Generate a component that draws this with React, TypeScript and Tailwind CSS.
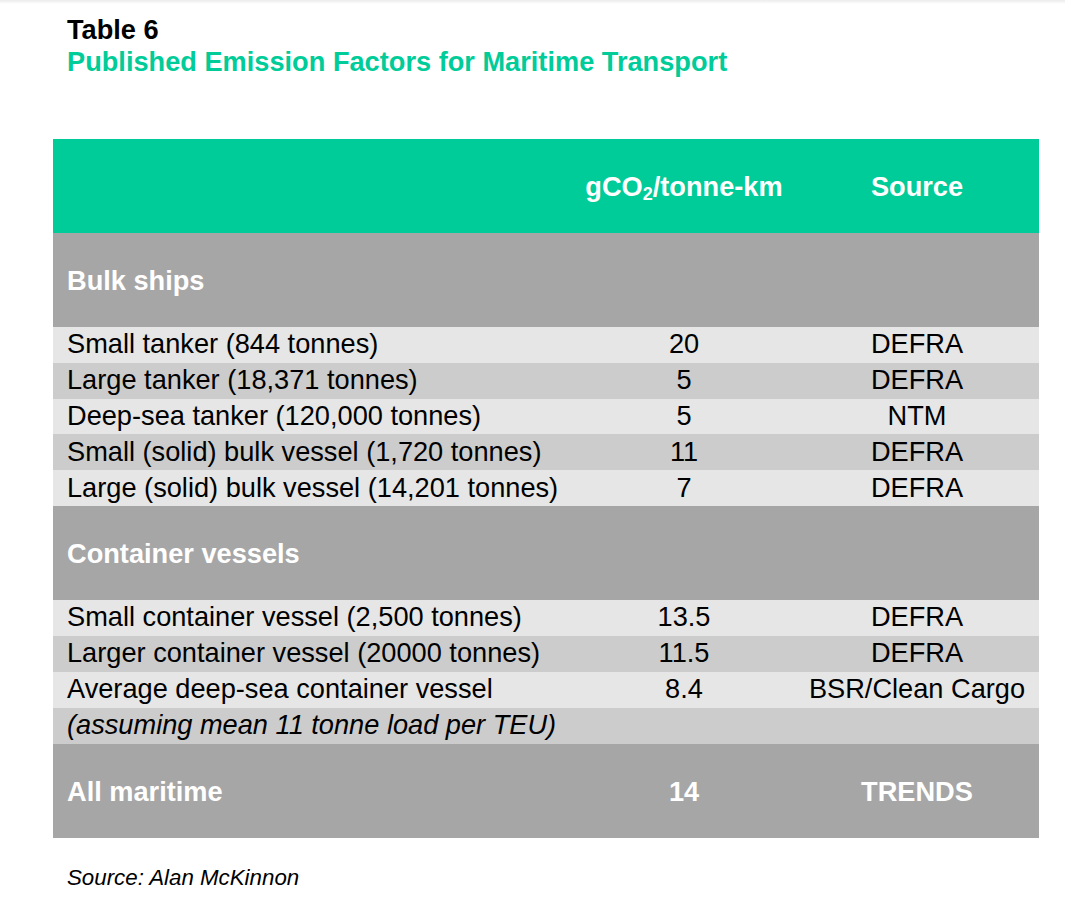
import React from "react";

type Row = {
  label: string;
  value?: string;
  source?: string;
  italic?: boolean;
};

const bulkRows: Row[] = [
  { label: "Small tanker (844 tonnes)", value: "20", source: "DEFRA" },
  { label: "Large tanker (18,371 tonnes)", value: "5", source: "DEFRA" },
  { label: "Deep-sea tanker (120,000 tonnes)", value: "5", source: "NTM" },
  { label: "Small (solid) bulk vessel (1,720 tonnes)", value: "11", source: "DEFRA" },
  { label: "Large (solid) bulk vessel (14,201 tonnes)", value: "7", source: "DEFRA" },
];

const containerRows: Row[] = [
  { label: "Small container vessel (2,500 tonnes)", value: "13.5", source: "DEFRA" },
  { label: "Larger container vessel (20000 tonnes)", value: "11.5", source: "DEFRA" },
  { label: "Average deep-sea container vessel", value: "8.4", source: "BSR/Clean Cargo" },
  { label: "(assuming mean 11 tonne load per TEU)", italic: true },
];

const cols = "grid grid-cols-[520px_222px_244px]";

const GroupRow = ({ label, value, source }: Row) => (
  <div className={`${cols} h-[94px] bg-[#a6a6a6] pt-[2px] font-bold text-white`}>
    <div className="flex items-center pl-[14px]">{label}</div>
    <div className="flex items-center justify-center">{value}</div>
    <div className="flex items-center justify-center">{source}</div>
  </div>
);

const DataRows = ({ rows, rowClass }: { rows: Row[]; rowClass: string }) => (
  <>
    {rows.map((row, i) => (
      <div
        key={row.label}
        className={`${cols} ${rowClass} ${i % 2 === 0 ? "bg-[#e6e6e6]" : "bg-[#cccccc]"} text-black`}
      >
        <div className={`flex items-center whitespace-nowrap pb-[1px] pl-[14px] ${row.italic ? "italic" : ""}`}>
          {row.label}
        </div>
        <div className="flex items-center justify-center pb-[1px]">{row.value}</div>
        <div className="flex items-center justify-center whitespace-nowrap pb-[1px]">{row.source}</div>
      </div>
    ))}
  </>
);

export default function App() {
  return (
    <div className="min-h-[905px] w-[1065px] bg-white font-['Liberation_Sans',Arial,sans-serif]">
      <div className="h-1 bg-gradient-to-b from-[#ececec] to-white" />

      {/* Title */}
      <div className="pl-[67px] pt-[10px] text-[27.2px] font-bold leading-[32px]">
        <h1 className="text-black">Table 6</h1>
        <h2 className="text-[#00cc99]">Published Emission Factors for Maritime Transport</h2>
      </div>

      {/* Table */}
      <div className="ml-[53px] mt-[61px] w-[986px] text-[27.2px] leading-[32px]">
        <div className={`${cols} h-[94px] bg-[#00cc99] pt-[1px] font-bold text-white`}>
          <div />
          <div className="flex items-center justify-center">
            <span>
              gCO<sub className="text-[18px]">2</sub>/tonne-km
            </span>
          </div>
          <div className="flex items-center justify-center">Source</div>
        </div>

        <GroupRow label="Bulk ships" />
        <DataRows rows={bulkRows} rowClass="h-[35.8px]" />

        <GroupRow label="Container vessels" />
        <DataRows rows={containerRows} rowClass="h-9" />

        <GroupRow label="All maritime" value="14" source="TRENDS" />
      </div>

      <p className="mt-[27px] pl-[67px] text-[22.3px] italic leading-[26px] text-black">
        Source: Alan McKinnon
      </p>
    </div>
  );
}
